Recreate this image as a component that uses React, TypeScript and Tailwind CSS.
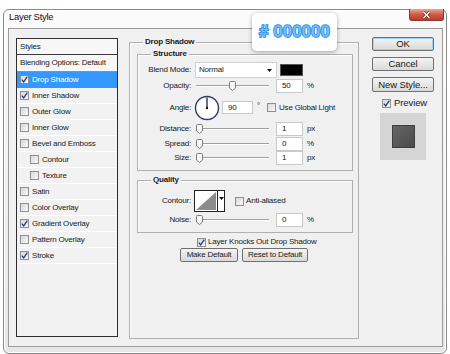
import React from 'react';

const STYLES = [
    { name: 'Drop Shadow', checked: true, active: true },
    { name: 'Inner Shadow', checked: true },
    { name: 'Outer Glow' },
    { name: 'Inner Glow' },
    { name: 'Bevel and Emboss' },
    { name: 'Contour', indent: true },
    { name: 'Texture', indent: true },
    { name: 'Satin' },
    { name: 'Color Overlay' },
    { name: 'Gradient Overlay', checked: true },
    { name: 'Pattern Overlay' },
    { name: 'Stroke', checked: true },
];

function Check({ checked }: { checked?: boolean }) {
    return (
        <span className="flex h-[9px] w-[9px] shrink-0 items-center justify-center border border-[#8e8f8f] bg-linear-to-br from-[#d6d6d6] to-[#fbfbfb]">
            {checked && (
                <svg width="7" height="7" viewBox="0 0 7 7">
                    <path d="M0.8 3.6 L2.7 5.9 L6.3 0.6" fill="none" stroke="#1d3b8f" strokeWidth="1.3" />
                </svg>
            )}
        </span>
    );
}

function Slider({ thumb }: { thumb: string }) {
    return (
        <div className="relative ml-[4px] flex h-[12px] w-[73px] items-center">
            <div className="h-[2px] w-full border-t border-[#a0a0a0] bg-white" />
            <svg className={`absolute top-[1px] ${thumb}`} width="7" height="10" viewBox="0 0 7 10">
                <path d="M0.5 1.6 Q0.5 0.5 1.6 0.5 H5.4 Q6.5 0.5 6.5 1.6 V7 L3.5 9.5 L0.5 7 Z" fill="#f6f6f6" stroke="#7b7b7b" />
            </svg>
        </div>
    );
}

function NumBox({ value, className = 'ml-[7px] w-[27px] h-[14px]' }: { value: string; className?: string }) {
    return (
        <div className={`flex items-center border border-[#c9c9c9] bg-white pl-[5px] text-[#111] ${className}`}>
            {value}
        </div>
    );
}

function Label({ children }: { children: React.ReactNode }) {
    return <span className="w-[54px] shrink-0 pr-[1px] text-right">{children}</span>;
}

function SliderRow({ label, thumb, value, unit, className }: { label: string; thumb: string; value: string; unit: string; className: string }) {
    return (
        <div className={`flex items-center ${className}`}>
            <Label>{label}</Label>
            <Slider thumb={thumb} />
            <NumBox value={value} />
            <span className="ml-[4px]">{unit}</span>
        </div>
    );
}

function SmallButton({ children, className }: { children: React.ReactNode; className: string }) {
    return (
        <div className={`flex items-center justify-center rounded-[2px] border border-[#707070] bg-linear-to-b from-[#f4f4f4] to-[#d9d9d9] ${className}`}>
            {children}
        </div>
    );
}

export default function App() {
    return (
        <div className="relative h-[354px] w-[450px] overflow-hidden bg-white font-['Liberation_Sans',Arial,sans-serif] text-[8px] leading-[10px] tracking-[-0.2px] text-[#1a1a1a]">
            {/* Fenêtre */}
            <div className="ml-[3px] mt-[9px] flex h-[345px] w-[444px] flex-col rounded-[6px] border border-[#8a8a8a] bg-linear-to-b from-[#fcfcfc] to-[#e6e6e6] shadow-[inset_0_0_0_1px_#ffffff]">
                {/* Barre de titre */}
                <div className="flex h-[18px] shrink-0 items-start justify-between pl-[5px] pr-[2px]">
                    <span className="mt-[1px] text-[9.5px] leading-[12px] tracking-[-0.3px] text-[#111]">Layer Style</span>
                    <div className="-mt-px flex h-[12px] w-[35px] items-center justify-center rounded-b-[3px] border border-t-0 border-[#8a3a30] bg-linear-to-b from-[#e9a898] via-[#cf5a48] to-[#c0392b]">
                        <svg width="9" height="8" viewBox="0 0 9 8">
                            <path d="M1.5 1 L7.5 7 M7.5 1 L1.5 7" stroke="#6b2a22" strokeWidth="2.6" />
                            <path d="M1.5 1 L7.5 7 M7.5 1 L1.5 7" stroke="#ffffff" strokeWidth="1.4" />
                        </svg>
                    </div>
                </div>

                {/* Contenu */}
                <div className="ml-[4px] mr-[3px] flex h-[319px] items-start border border-[#9b9b9b] bg-[#f0f0f0] pl-[7px] pt-[6px]">
                    {/* Liste des styles */}
                    <div className="mt-[3px] flex h-[299px] w-[102px] shrink-0 flex-col border border-[#2e2e2e] bg-[#f2f2f2]">
                        <div className="flex h-[16px] items-center border-b border-[#3a3a3a] bg-[#f7f7f7] pl-[3px]">Styles</div>
                        <div className="flex h-[17px] items-center border-b border-[#8f8f8f] bg-[#f7f7f7] pl-[3px]">Blending Options: Default</div>
                        {STYLES.map((s) => (
                            <div
                                key={s.name}
                                className={`flex h-[16px] items-center gap-[3px] border-b ${s.active ? 'border-[#3399ff] bg-[#3399ff] text-white' : 'border-white'} ${s.indent ? 'pl-[13px]' : 'pl-[3px]'}`}
                            >
                                <Check checked={s.checked} />
                                <span>{s.name}</span>
                            </div>
                        ))}
                    </div>

                    {/* Drop Shadow */}
                    <fieldset className="ml-[11px] mt-[2px] h-[302px] w-[230px] shrink-0 border border-[#b0b0b0] pl-[7px] pr-[5px] shadow-[inset_1px_1px_0_#ffffff]">
                        <legend className="ml-[6px] px-[2px] font-bold">Drop Shadow</legend>

                        <fieldset className="mt-[2px] border border-[#b0b0b0] pb-[5px] pt-[3px] shadow-[inset_1px_1px_0_#ffffff]">
                            <legend className="ml-[13px] px-[2px] font-bold">Structure</legend>

                            <div className="flex h-[16px] items-center">
                                <Label>Blend Mode:</Label>
                                <div className="ml-[3px] flex h-[16px] w-[82px] items-center justify-between border border-[#d0d0d0] bg-white pl-[3px] pr-[4px]">
                                    <span>Normal</span>
                                    <svg width="5" height="3" viewBox="0 0 5 3">
                                        <path d="M0 0 H5 L2.5 3 Z" fill="#111" />
                                    </svg>
                                </div>
                                <div className="ml-[3px] h-[12px] w-[23px] border border-[#555] bg-black" />
                            </div>

                            <SliderRow label="Opacity:" thumb="left-[33px]" value="50" unit="%" className="h-[16px]" />

                            <div className="mt-[1px] flex h-[25px] items-center">
                                <Label>Angle:</Label>
                                <svg className="ml-[2px]" width="26" height="26" viewBox="0 0 26 26">
                                    <circle cx="13" cy="13" r="11.5" fill="#ffffff" stroke="#2c3b6b" strokeWidth="1.4" />
                                    <path d="M13 13 V2.5" stroke="#111" strokeWidth="1.2" />
                                    <circle cx="13" cy="13" r="1.2" fill="#111" />
                                </svg>
                                <NumBox value="90" className="ml-[2px] h-[13px] w-[31px]" />
                                <span className="ml-[4px] -mt-[4px]">°</span>
                                <span className="ml-[7px]">
                                    <Check />
                                </span>
                                <span className="ml-[3px]">Use Global Light</span>
                            </div>

                            <SliderRow label="Distance:" thumb="left-0" value="1" unit="px" className="mt-[2px] h-[14px]" />
                            <SliderRow label="Spread:" thumb="left-0" value="0" unit="%" className="mt-[1px] h-[14px]" />
                            <SliderRow label="Size:" thumb="left-0" value="1" unit="px" className="h-[14px]" />
                        </fieldset>

                        <fieldset className="mt-[4px] border border-[#b0b0b0] pb-[5px] pt-[5px] shadow-[inset_1px_1px_0_#ffffff]">
                            <legend className="ml-[13px] px-[2px] font-bold">Quality</legend>

                            <div className="flex h-[22px] items-center">
                                <Label>Contour:</Label>
                                <div className="ml-[2px] flex h-[22px] w-[31px] border border-[#222] bg-white">
                                    <svg width="22" height="20" viewBox="0 0 22 20">
                                        <path d="M1 19 L21 1 V19 Z" fill="#8c8c8c" />
                                    </svg>
                                    <div className="flex w-[7px] justify-center border-l border-[#222] pt-[6px]">
                                        <svg width="5" height="3" viewBox="0 0 5 3">
                                            <path d="M0 0 H5 L2.5 3 Z" fill="#111" />
                                        </svg>
                                    </div>
                                </div>
                                <span className="ml-[10px]">
                                    <Check />
                                </span>
                                <span className="ml-[2px]">Anti-aliased</span>
                            </div>

                            <SliderRow label="Noise:" thumb="left-0" value="0" unit="%" className="mt-[1px] h-[14px]" />
                        </fieldset>

                        <div className="ml-[60px] mt-[4px] flex h-[10px] items-center gap-[2px]">
                            <Check checked />
                            <span>Layer Knocks Out Drop Shadow</span>
                        </div>

                        <div className="ml-[43px] mt-[1px] flex gap-[4px]">
                            <SmallButton className="h-[14px] w-[58px]">Make Default</SmallButton>
                            <SmallButton className="h-[14px] w-[66px]">Reset to Default</SmallButton>
                        </div>
                    </fieldset>

                    {/* Boutons */}
                    <div className="ml-[13px] mt-[2px] flex w-[62px] shrink-0 flex-col text-[9.5px] leading-[12px] tracking-[-0.1px]">
                        <SmallButton className="h-[14px] border-[#3c7fb1] shadow-[inset_0_0_0_1px_#9fd3f5]">OK</SmallButton>
                        <SmallButton className="mt-[6px] h-[14px]">Cancel</SmallButton>
                        <SmallButton className="mt-[6px] h-[15px]">New Style...</SmallButton>
                        <div className="ml-[10px] mt-[6px] flex h-[10px] items-center gap-[3px]">
                            <Check checked />
                            <span>Preview</span>
                        </div>
                        <div className="ml-[8px] mt-[5px] flex h-[47px] w-[46px] items-center justify-center bg-[#d5d5d5]">
                            <div className="h-[23px] w-[23px] border border-[#3e3e3e] bg-linear-to-br from-[#666] to-[#4a4a4a]" />
                        </div>
                    </div>
                </div>
            </div>

            {/* Bulle couleur */}
            <div className="absolute left-[252px] top-[13px] flex h-[38px] w-[85px] items-center justify-center rounded-[5px] bg-white shadow-[0_1px_4px_rgba(0,0,0,0.35)]">
                <span className="text-[17px] font-bold leading-[20px] tracking-[0px] text-[#6fbdf5] [-webkit-text-stroke:1.5px_#2a86db] [paint-order:stroke_fill]">
                    # 000000
                </span>
            </div>
        </div>
    );
}
